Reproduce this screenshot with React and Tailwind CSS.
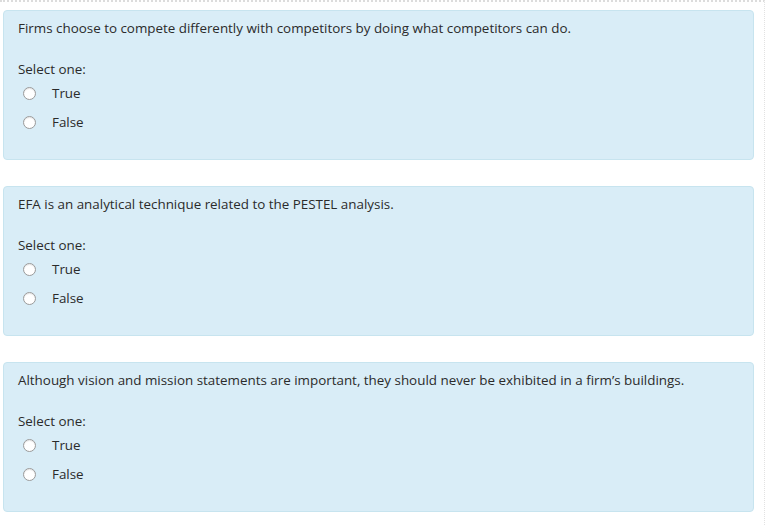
const questions = [
  "Firms choose to compete differently with competitors by doing what competitors can do.",
  "EFA is an analytical technique related to the PESTEL analysis.",
  "Although vision and mission statements are important, they should never be exhibited in a firm\u2019s buildings.",
];

function Radio({ label }) {
  return (
    <label className="flex items-center h-[29px]">
      <span className="ml-[5px] w-[13px] h-[13px] rounded-full border border-[#9a9a9a] bg-white shadow-[inset_0_1px_1px_rgba(0,0,0,0.1)]" />
      <span className="ml-[16px]">{label}</span>
    </label>
  );
}

function Question({ text }) {
  return (
    <div className="h-[150px] bg-[#d9edf7] border border-[#c7e4ef] rounded-[4px] px-[14px] pt-[7px]">
      <p className="leading-[20px]">{text}</p>
      <p className="mt-[21px] leading-[20px]">Select one:</p>
      <div>
        <Radio label="True" />
        <Radio label="False" />
      </div>
    </div>
  );
}

export default function App() {
  return (
    <div
      className="w-[782px] h-[525px] bg-white text-[13.4px] text-[#2b2b2b] overflow-hidden"
      style={{ fontFamily: "'Open Sans', Lato, sans-serif" }}
    >
      <div className="w-[765px] h-full border-t-2 border-dotted border-[#dcdcdc] border-r border-r-[#e2e2e2]">
        <div className="pl-[3px] pr-[10px] pt-[8px] flex flex-col gap-[26px]">
          {questions.map((q, i) => (
            <Question key={i} text={q} />
          ))}
        </div>
      </div>
    </div>
  );
}
